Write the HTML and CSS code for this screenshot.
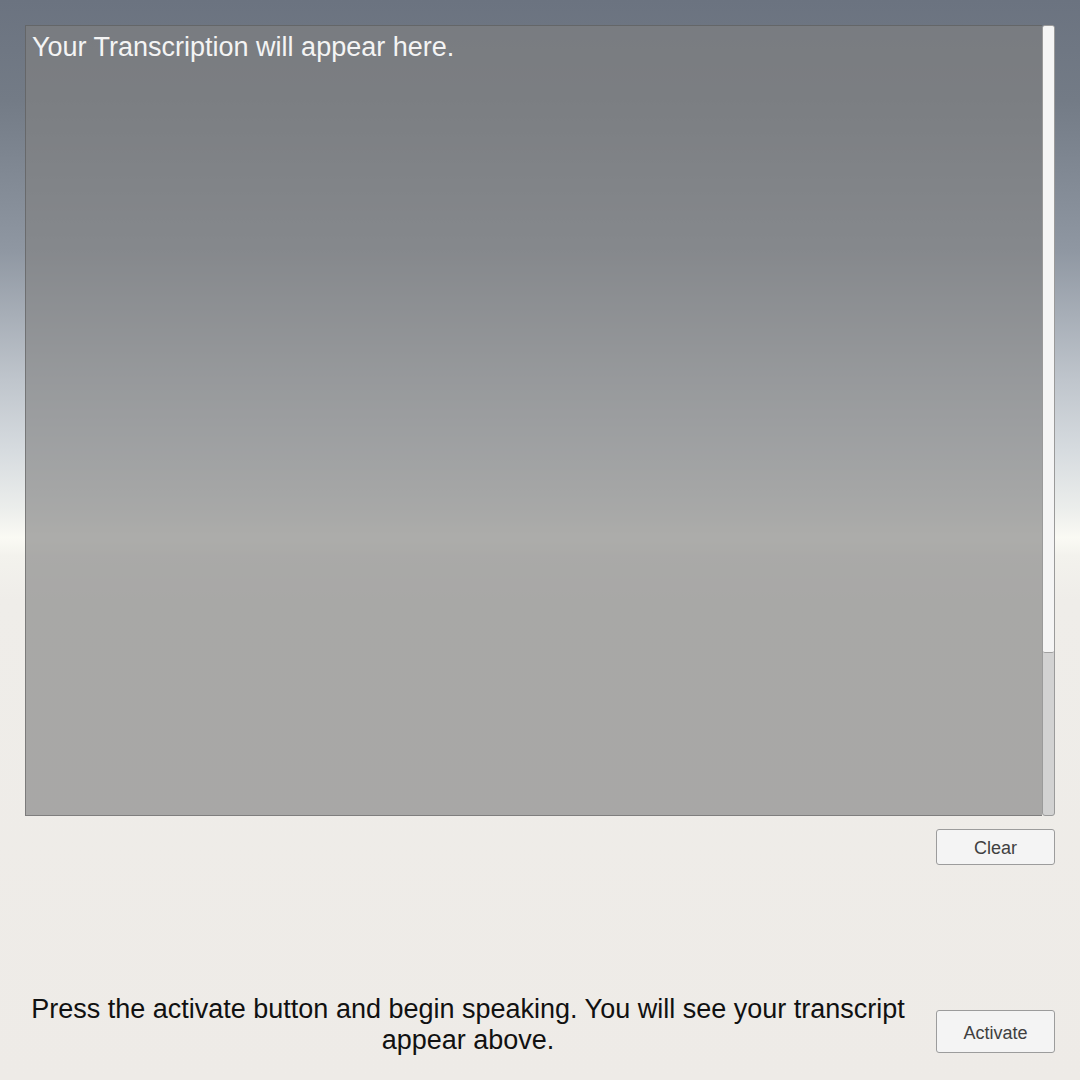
FILE: index.html
```html
<!DOCTYPE html>
<html lang="en">
<head>
<meta charset="utf-8">
<title>Transcription</title>
<link rel="stylesheet" href="styles.css">
</head>
<body>
<div class="app">
  <div class="transcript-area">
    <div class="transcript-panel">
      <p class="transcript-text">Your Transcription will appear here.</p>
    </div>
    <div class="scrollbar">
      <div class="scroll-handle"></div>
    </div>
  </div>
  <div class="clear-row">
    <button class="btn btn-clear">Clear</button>
  </div>
  <div class="spacer"></div>
  <div class="bottom-row">
    <p class="instructions">Press the activate button and begin speaking. You will see your transcript appear above.</p>
    <button class="btn btn-activate">Activate</button>
  </div>
</div>
</body>
</html>
```
FILE: styles.css
```css
html, body {
  margin: 0;
  padding: 0;
  width: 1080px;
  height: 1080px;
  overflow: hidden;
}
body {
  font-family: "Liberation Sans", Arial, sans-serif;
  background: linear-gradient(to bottom,
    #6b7380 0px,
    #737b86 100px,
    #8f97a2 250px,
    #bfc5cc 380px,
    #d6dbdf 450px,
    #eceeec 510px,
    #fafaf4 538px,
    #f3f2ed 556px,
    #efede9 600px,
    #eeebe7 1080px);
}
.app {
  box-sizing: border-box;
  height: 1080px;
  padding: 25px 25px 27px 25px;
  display: flex;
  flex-direction: column;
}
.transcript-area {
  display: flex;
  height: 791px;
  flex: none;
}
.transcript-panel {
  flex: 1;
  background: rgba(128, 128, 128, 0.64);
  border-top: 1px solid rgba(80, 80, 80, 0.5);
  border-left: 1px solid rgba(80, 80, 80, 0.5);
  border-bottom: 1px solid rgba(110, 110, 110, 0.7);
  box-sizing: border-box;
  padding: 5px 6px;
}
.transcript-text {
  margin: 0;
  color: #f4f4f4;
  font-size: 27px;
  line-height: 32px;
}
.scrollbar {
  width: 13px;
  flex: none;
  background: #d2d2d2;
  border: 1px solid #9a9a9a;
  border-radius: 3px;
  box-sizing: border-box;
  display: flex;
  flex-direction: column;
}
.scroll-handle {
  height: 626px;
  background: #f5f5f5;
  border-bottom: 1px solid #a0a0a0;
  border-radius: 2px;
}
.clear-row {
  display: flex;
  justify-content: flex-end;
  margin-top: 13px;
}
.btn {
  font-family: "Liberation Sans", Arial, sans-serif;
  width: 119px;
  background: #f4f4f4;
  border: 1px solid #9c9c9c;
  border-radius: 3px;
  color: #404040;
  font-size: 18px;
  padding: 0;
}
.btn-clear {
  height: 36px;
  padding-top: 2px;
}
.btn-activate {
  height: 43px;
  flex: none;
  padding-top: 3px;
}
.spacer {
  flex: 1;
}
.bottom-row {
  display: flex;
  align-items: flex-end;
  gap: 25px;
}
.instructions {
  flex: 1;
  margin: 0 0 -3px 0;
  text-align: center;
  color: #111111;
  font-size: 27px;
  line-height: 31px;
}
```
